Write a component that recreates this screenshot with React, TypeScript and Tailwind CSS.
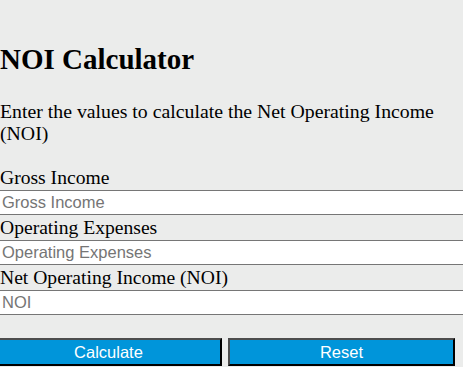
import { FC } from 'react'

const fields = [
  { label: 'Gross Income', placeholder: 'Gross Income' },
  { label: 'Operating Expenses', placeholder: 'Operating Expenses' },
  { label: 'Net Operating Income (NOI)', placeholder: 'NOI' },
]

const App: FC = () => {
  return (
    <div className="min-h-[367px] w-full overflow-hidden bg-[#ebeceb] font-['Liberation_Serif',serif] text-black">
      <h1 className="pt-[43px] text-[29px] font-bold leading-[33px]">NOI Calculator</h1>
      <p className="mt-[24px] text-[19.8px] leading-[22px]">
        Enter the values to calculate the Net Operating Income (NOI)
      </p>
      <div className="mt-[21px] flex flex-col">
        {fields.map((field) => (
          <div key={field.label} className="flex flex-col">
            <label className="h-[25px] text-[19.6px] leading-[25px]">{field.label}</label>
            <input
              type="text"
              placeholder={field.placeholder}
              className="h-[25px] w-full border-y border-[#767676] bg-white pl-[2px] font-['Liberation_Sans',Arial,sans-serif] text-[16.5px] text-black outline-none placeholder:text-[#757575]"
            />
          </div>
        ))}
      </div>
      <div className="-ml-[5px] mt-[23px] flex gap-[6px]">
        <button className="h-[28px] w-[227px] border-2 border-t-[#4d4d4d] border-l-[#4d4d4d] border-b-black border-r-black bg-[#0095da] font-['Liberation_Sans',Arial,sans-serif] text-[16.5px] leading-[24px] text-white">
          Calculate
        </button>
        <button className="h-[28px] w-[227px] border-2 border-t-[#4d4d4d] border-l-[#4d4d4d] border-b-black border-r-black bg-[#0095da] font-['Liberation_Sans',Arial,sans-serif] text-[16.5px] leading-[24px] text-white">
          Reset
        </button>
      </div>
    </div>
  )
}

export default App
